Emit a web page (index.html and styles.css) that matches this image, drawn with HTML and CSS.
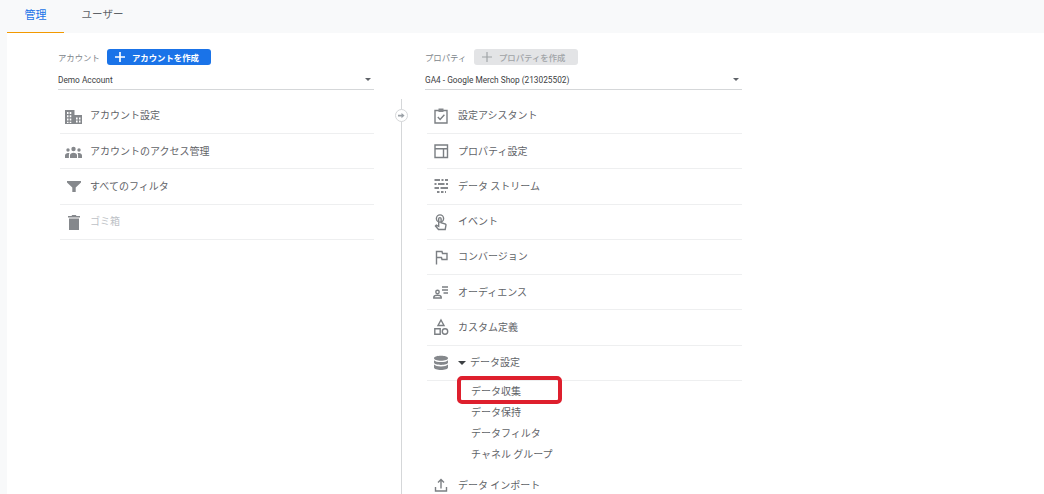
FILE: index.html
```html
<!DOCTYPE html>
<html lang="ja">
<head>
<meta charset="utf-8">
<title>管理</title>
<link rel="stylesheet" href="styles.css">
</head>
<body>
<nav class="tabs">
  <a class="tab tab-active">管理</a>
  <a class="tab tab-user">ユーザー</a>
</nav>
<main class="panel">
  <section class="col col-account">
    <div class="col-head">
      <span class="col-label">アカウント</span>
      <span class="btn btn-primary"><svg class="plus" viewBox="0 0 12 12"><path d="M5 0h2v5h5v2H7v5H5V7H0V5h5z"/></svg>アカウントを作成</span>
    </div>
    <div class="select"><span>Demo Account</span><i class="caret"></i></div>
    <ul class="rows">
      <li class="row"><svg class="ico" viewBox="0 0 18 18"><path class="f" fill-rule="evenodd" d="M1 3h9.500v5H18v9H1zM3 5v2h1.500V5zM5.700 5v2h1.600V5zM3 8.300v2h1.500v-2zM5.700 8.300v2h1.600v-2zM3 11.600v2h1.500v-2zM5.700 11.600v2h1.600v-2zM12 10.500v2h1.600v-2zM15 10.500v2h1.500v-2zM12 13.500v2h1.600v-2zM15 13.500v2h1.500v-2zM3 14.700V16h1.500v-1.300zM5.700 14.700V16h1.600v-1.300z"/></svg><span>アカウント設定</span></li>
      <li class="row"><svg class="ico" viewBox="0 0 18 18"><circle class="f" cx="9.500" cy="7" r="2.200"/><circle class="f" cx="4" cy="8" r="1.700"/><circle class="f" cx="15" cy="8" r="1.700"/><path class="f" d="M1 16v-2.500C1 12 2.500 11 4 11c.6 0 1.100.1 1.500.3-.4.500-.6 1.100-.6 2V16zM6 16v-2.700c0-1.500 1.500-2.600 3.500-2.600s3.500 1.100 3.500 2.600V16zM14.100 16v-2.700c0-.9-.2-1.500-.6-2 .4-.2.900-.3 1.500-.3 1.500 0 3 1 3 2.500V16z"/></svg><span>アカウントのアクセス管理</span></li>
      <li class="row"><svg class="ico" viewBox="0 0 18 18"><path class="f" d="M3 4h14v1.400l-5.300 5.100V15H8.300v-4.500L3 5.400z"/></svg><span>すべてのフィルタ</span></li>
      <li class="row row-off"><svg class="ico" viewBox="0 0 18 18"><path class="f" d="M4 3h3.500l.7-1h3.600l.7 1H16v1.500H4zM5 5.500h10V17H5z"/></svg><span>ゴミ箱</span></li>
    </ul>
  </section>
  <div class="rail"><span class="rail-dot"><svg viewBox="0 0 8 8"><path d="M0 3h4V1l3.500 3L4 7V5H0z"/></svg></span></div>
  <section class="col col-prop">
    <div class="col-head">
      <span class="col-label">プロパティ</span>
      <span class="btn btn-off"><svg class="plus" viewBox="0 0 12 12"><path d="M5.300 0h1.400v5.300H12v1.400H6.700V12H5.300V6.700H0V5.300h5.300z"/></svg>プロパティを作成</span>
    </div>
    <div class="select"><span>GA4 - Google Merch Shop (213025502)</span><i class="caret"></i></div>
    <ul class="rows rows-prop">
      <li class="row"><svg class="ico" viewBox="0 0 18 18"><path class="s" d="M3 3.500h12v12.500H3z"/><path class="f" d="M6.500 1.500h5V5h-5z"/><path class="s" d="m5.800 10 2.300 2.400 4.300-4.600"/></svg><span>設定アシスタント</span></li>
      <li class="row"><svg class="ico" viewBox="0 0 18 18"><path class="s" d="M3 3h12.500v12.500H3zM3 6.800h12.500M11.500 6.800v8.700"/></svg><span>プロパティ設定</span></li>
      <li class="row"><svg class="ico" viewBox="0 0 18 18"><path class="s2" d="M2.500 3h5.500M9.500 3h2M13 3h3M2.500 7h2M6 7h6.500M14 7h2M2.500 11h4.500M8.500 11h7.500M5 15h2.500M9 15h2.500M13 15h1"/></svg><span>データ ストリーム</span></li>
      <li class="row"><svg class="ico" viewBox="0 0 18 18"><circle class="s" cx="8" cy="5.500" r="3.600"/><path class="s" d="M6.500 16.500 3.500 13l.8-.8 2.400 1.100V5.800a1.200 1.200 0 0 1 2.400 0v4l4.400 1.200.5.900-.8 4.600z"/></svg><span>イベント</span></li>
      <li class="row"><svg class="ico" viewBox="0 0 18 18"><path class="s" d="M4.500 16.500V3.500h5.500l.5 2h4.500v6h-5l-.5-2h-5"/></svg><span>コンバージョン</span></li>
      <li class="row"><svg class="ico" viewBox="0 0 18 18"><circle class="s" cx="5.500" cy="9" r="1.700"/><path class="s" d="M1.800 15v-.8c0-1.200 1.700-1.900 3.700-1.900s3.700.7 3.700 1.900v.8zM10 4h6M10 7h6M11.500 10H16"/></svg><span>オーディエンス</span></li>
      <li class="row"><svg class="ico" viewBox="0 0 18 18"><path class="s" d="M9 2 12 7.500H6zM2.800 10.800h5.400v5.400H2.800z"/><circle class="s" cx="13" cy="13.500" r="2.700"/></svg><span>カスタム定義</span></li>
      <li class="row row-open"><svg class="ico" viewBox="0 0 18 18"><path class="f" d="M2 4.200C2 2.700 5.100 1.800 9 1.800s7 .9 7 2.400-3.100 2.500-7 2.500-7-1-7-2.500zM2 6.200c1 1.300 3.800 1.900 7 1.900s6-.6 7-1.900v2.300c0 1.500-3.100 2.400-7 2.400s-7-.9-7-2.400zM2 10.600c1 1.300 3.800 1.900 7 1.900s6-.6 7-1.900v3c0 1.500-3.100 2.500-7 2.500s-7-1-7-2.500z"/></svg><i class="caret caret-open"></i><span>データ設定</span></li>
    </ul>
    <ul class="subs">
      <li class="sub sub-marked">データ収集</li>
      <li class="sub">データ保持</li>
      <li class="sub">データフィルタ</li>
      <li class="sub">チャネル グループ</li>
    </ul>
    <div class="row row-last"><svg class="ico" viewBox="0 0 18 18"><path class="s" d="M3.500 11v4h11v-4M9 12.500V3.500M6 6.500l3-3 3 3"/></svg><span>データ インポート</span></div>
  </section>
</main>
</body>
</html>
```

FILE: styles.css
```css
*, *::before, *::after { box-sizing: border-box; }
html, body { margin: 0; height: 100%; }
body {
  width: 1044px;
  height: 494px;
  overflow: hidden;
  background: #f8f9fa;
  font-family: "Noto Sans CJK JP", "Noto Sans", sans-serif;
  color: #5f6368;
  display: flex;
  flex-direction: column;
}
ul { list-style: none; margin: 0; padding: 0; }

.tabs { display: flex; height: 33px; padding-left: 7px; flex: none; }
.tab {
  width: 57px;
  height: 33px;
  text-align: center;
  font-size: 11px;
  line-height: 28px;
  color: #5f6368;
}
.tab-user { font-size: 10.500px; margin-left: 10px; }
.tab-active { color: #1a73e8; border-bottom: 1px solid #f29900; }

.panel {
  flex: 1;
  margin-left: 7px;
  background: #fff;
  display: flex;
  align-items: stretch;
  padding-left: 51px;
  overflow: hidden;
}
.col { width: 316px; flex: none; padding-top: 16px; }
.col-prop { width: 317px; }

.col-head { display: flex; align-items: center; height: 16px; }
.col-label { font-size: 8.400px; color: #80868b; width: 49px; flex: none; }
.btn {
  height: 16px;
  border-radius: 3px;
  display: inline-flex;
  align-items: center;
  font-size: 8.400px;
  font-weight: 700;
  padding: 0 12px 0 8px;
}
.plus { width: 10px; height: 10px; margin-right: 7px; fill: currentColor; }
.btn-primary { background: #1a73e8; color: #fff; }
.btn-off { background: #e3e4e6; color: #a0a3a6; font-weight: 500; }

.select {
  height: 25px;
  padding: 5px 3px 0 0;
  border-bottom: 1px solid #d5d7d9;
  display: flex;
  align-items: center;
  justify-content: space-between;
  font-family: Roboto, sans-serif;
  font-size: 8.300px;
  color: #3c4043;
}
.caret {
  width: 0;
  height: 0;
  border: 3.500px solid transparent;
  border-top: 3.500px solid #5f6368;
  border-bottom: 0;
  flex: none;
}

.rows { margin: 8.750px 0 0 2px; }
.row {
  height: 35.250px;
  border-bottom: 1px solid #eeeff0;
  display: flex;
  align-items: center;
  padding-left: 4px;
  font-size: 10px;
  color: #5f6368;
}
.rows .row span { margin-top: -2px; }
.col-prop .row { padding-left: 5px; }
.ico { width: 18px; height: 18px; margin-right: 8px; flex: none; }
.f { fill: #85888c; }
.s { fill: none; stroke: #7b7f83; stroke-width: 1.400; }
.s2 { fill: none; stroke: #85888c; stroke-width: 1.900; }
.row-off { color: #bdc1c6; }
.caret-open {
  border-width: 4px;
  border-top-color: #3c4043;
  margin-right: 4px;
}

.subs { margin-left: 46px; }
.sub {
  position: relative;
  height: 21px;
  line-height: 20px;
  font-size: 10px;
  color: #5f6368;
}
.sub-marked::after {
  content: "";
  position: absolute;
  left: -14px;
  top: -4.500px;
  width: 105px;
  height: 28px;
  border: 4px solid #de1f2d;
  border-radius: 5px;
}
.row-last { border-bottom: 0; margin: 2.500px 0 0 2px; }

.rail {
  width: 51px;
  flex: none;
  position: relative;
  margin-top: 66px;
}
.rail::before {
  content: "";
  position: absolute;
  left: 27px;
  top: 0;
  bottom: 0;
  width: 1px;
  background: #d5d7d9;
}
.rail-dot {
  position: absolute;
  left: 21px;
  top: 10px;
  width: 13px;
  height: 13px;
  border: 1px solid #d5d7d9;
  border-radius: 50%;
  background: #fff;
  display: flex;
  align-items: center;
  justify-content: center;
}
.rail-dot svg { width: 7px; height: 7px; fill: #9aa0a6; }
```
